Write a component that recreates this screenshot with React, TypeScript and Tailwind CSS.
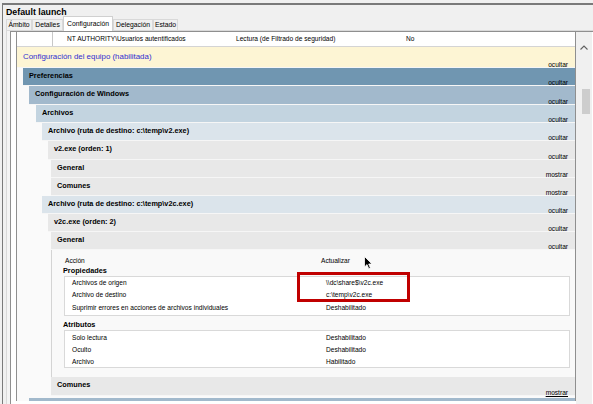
import React from "react";

type HProps = {
  title: string;
  link: string;
  bg: string;
  h?: string;
  underline?: boolean;
};

function Header({ title, link, bg, h = "h-[18px]", underline }: HProps) {
  return (
    <div className={`flex justify-between border-b border-[#f6f6f6] ${bg} ${h}`}>
      <span className="whitespace-nowrap pl-[6px] pt-[4px] text-[7.3px] font-bold leading-[8px]">{title}</span>
      <span className={`-mb-[2px] self-end pr-[7px] text-[6.6px] leading-[8px] ${underline ? "underline" : ""}`}>{link}</span>
    </div>
  );
}

function Tab({ label, w, active }: { label: string; w: string; active?: boolean }) {
  return active ? (
    <div className={`relative z-10 -mb-[1px] flex h-[15px] items-center justify-center border border-b-0 border-[#d0d0d0] bg-white text-[6.8px] leading-[9px] ${w}`}>
      {label}
    </div>
  ) : (
    <div className={`flex h-[11px] items-center justify-center border border-b-0 border-[#d9d9d9] bg-[#f0f0f0] text-[6.8px] leading-[9px] ${w}`}>
      {label}
    </div>
  );
}

function Chevron({ up }: { up?: boolean }) {
  return (
    <svg width="8" height="5" viewBox="0 0 8 5">
      <polyline
        points={up ? "0.5,4.5 4,1 7.5,4.5" : "0.5,0.5 4,4 7.5,0.5"}
        fill="none"
        stroke="#606060"
        strokeWidth="1.1"
      />
    </svg>
  );
}

export default function App() {
  return (
    <div className="h-[404px] w-[593px] overflow-hidden bg-[#f0f0f0] pl-[2px] pt-[3px] font-['Liberation_Sans',Arial,sans-serif] text-black">
      <div className="flex h-full flex-col border-l border-t-2 border-[#7a7a7a]">
        <div className="h-[13px] pl-[3px] pt-[1.5px] text-[8.8px] font-bold leading-[10px]">Default launch</div>
        <div className="flex h-[13px] items-end pl-[3px]">
          <Tab label="Ámbito" w="w-[26px]" />
          <Tab label="Detalles" w="w-[31px]" />
          <Tab label="Configuración" w="w-[50px]" active />
          <Tab label="Delegación" w="w-[40px]" />
          <Tab label="Estado" w="w-[25px]" />
        </div>
        <div className="ml-[3px] flex flex-1 flex-col border-l border-t border-[#d9d9d9] bg-[#f4f4f4]">
          <div className="ml-[3px] flex flex-1 border-l border-t border-[#8f8f8f] bg-white pl-[5px]">
            <div className="h-[369px] w-[560px] overflow-hidden border-l border-r border-[#8f8f8f] bg-[#fafafa]">
              {/* tail of a table row */}
              <div className="flex h-[15px] items-center border-b border-[#d4d4d4] bg-white text-[6.6px] leading-[9px]">
                <div className="h-full w-[36px] border-r border-[#c8c8c8]" />
                <span className="w-[183px] whitespace-nowrap pl-[14px]">NT AUTHORITY\Usuarios autentificados</span>
                <span className="w-[170px] whitespace-nowrap">Lectura (de Filtrado de seguridad)</span>
                <span>No</span>
              </div>
              {/* computer configuration */}
              <div className="flex h-[21px] justify-between border-b border-[#f6f6f6] bg-[#fdf5d4]">
                <span className="whitespace-nowrap pl-[6px] pt-[5.5px] text-[7.9px] leading-[9px] text-[#2f2fd0]">
                  Configuración del equipo (habilitada)
                </span>
                <span className="-mb-[2px] self-end pr-[7px] text-[6.6px] leading-[8px]">ocultar</span>
              </div>
              <div className="pl-[6px]">
                <Header title="Preferencias" link="ocultar" bg="bg-[#7096b1]" />
                <div className="pl-[6px]">
                  <Header title="Configuración de Windows" link="ocultar" bg="bg-[#a2b9cc]" h="h-[19px]" />
                  <div className="pl-[7px]">
                    <Header title="Archivos" link="ocultar" bg="bg-[#c3d4e0]" />
                    <div className="pl-[6px]">
                      <Header title="Archivo (ruta de destino: c:\temp\v2.exe)" link="ocultar" bg="bg-[#dbe4eb]" />
                      <div className="pl-[6px]">
                        <Header title="v2.exe (orden: 1)" link="ocultar" bg="bg-[#e8e8e8]" h="h-[19px]" />
                        <div className="pl-[3px]">
                          <Header title="General" link="mostrar" bg="bg-[#e8e8e8]" />
                          <Header title="Comunes" link="mostrar" bg="bg-[#e8e8e8]" />
                        </div>
                      </div>
                      <Header title="Archivo (ruta de destino: c:\temp\v2c.exe)" link="ocultar" bg="bg-[#dbe4eb]" />
                      <div className="pl-[6px]">
                        <Header title="v2c.exe (orden: 2)" link="ocultar" bg="bg-[#e8e8e8]" />
                        <div className="pl-[3px]">
                          <Header title="General" link="ocultar" bg="bg-[#e8e8e8]" />
                          <div className="relative h-[127px] border-l border-[#d4d4d4] bg-[#f9f9f9] pr-[5px] pt-[5px]">
                            <div className="grid grid-cols-[256px_1fr] pl-[13px] text-[6.6px] leading-[11px]">
                              <span>Acción</span>
                              <span>Actualizar</span>
                            </div>
                            <div className="pl-[11px] text-[7.3px] font-bold leading-[10px]">Propiedades</div>
                            <div className="ml-[12px] h-[40px] border border-[#d9d9d9] bg-white pl-[7px] text-[6.6px] leading-[12.5px]">
                              <div className="grid grid-cols-[254px_1fr]">
                                <span>Archivos de origen</span>
                                <span>\\dc\share$\v2c.exe</span>
                                <span>Archivo de destino</span>
                                <span>c:\temp\v2c.exe</span>
                                <span>Suprimir errores en acciones de archivos individuales</span>
                                <span>Deshabilitado</span>
                              </div>
                            </div>
                            <div className="mt-[4px] pl-[11px] text-[7.3px] font-bold leading-[10px]">Atributos</div>
                            <div className="ml-[12px] h-[38px] border border-[#d9d9d9] bg-white pl-[7px] pt-[1px] text-[6.6px] leading-[12px]">
                              <div className="grid grid-cols-[254px_1fr]">
                                <span>Solo lectura</span>
                                <span>Deshabilitado</span>
                                <span>Oculto</span>
                                <span>Deshabilitado</span>
                                <span>Archivo</span>
                                <span>Habilitado</span>
                              </div>
                            </div>
                            {/* highlight box */}
                            <div className="absolute left-[245px] top-[22px] h-[30px] w-[113px] border-[3px] border-[#c00000]" />
                            {/* mouse cursor */}
                            <svg className="absolute left-[312px] top-[6px]" width="9" height="14" viewBox="0 0 9 14">
                              <path d="M0.5 0.5 L0.5 11 L3 8.6 L4.8 12.8 L6.4 12.1 L4.7 8 L8 8 Z" fill="#000" stroke="#fff" strokeWidth="0.8" />
                            </svg>
                          </div>
                          <Header title="Comunes" link="mostrar" bg="bg-[#e8e8e8]" h="h-[19px]" underline />
                        </div>
                      </div>
                    </div>
                  </div>
                  <div className="mt-[2px]">
                    <Header title="" link="" bg="bg-[#a2b9cc]" />
                  </div>
                </div>
              </div>
            </div>
            {/* scrollbar */}
            <div className="flex w-[16px] flex-col bg-[#f0f0f0]">
              <div className="h-[8px]" />
              <div className="flex h-[16px] items-center justify-center">
                <Chevron up />
              </div>
              <div className="h-[33px]" />
              <div className="ml-[6px] h-[25px] w-[8px] bg-[#cdcdcd]" />
              <div className="h-[298px]" />
              <div className="flex h-[16px] items-center justify-center">
                <Chevron />
              </div>
            </div>
          </div>
        </div>
      </div>
    </div>
  );
}
